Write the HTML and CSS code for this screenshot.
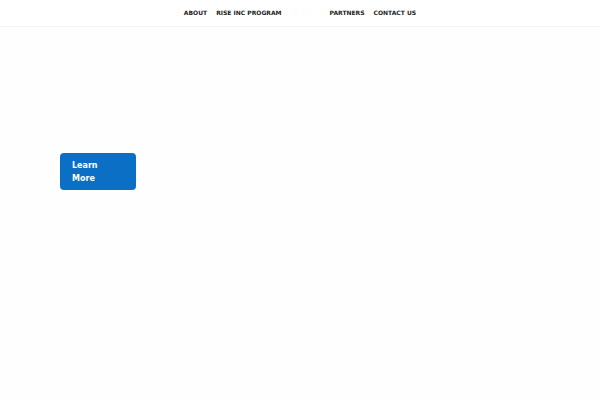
FILE: index.html
```
<!DOCTYPE html>
<html lang="en">
<head>
    <meta charset="UTF-8">
    <meta name="viewport" content="width=device-width, initial-scale=1.0">
    <title>Rise Inc</title>
    <link rel="stylesheet" href="styles.css">
</head>
<body>
    <header class="header">
        <nav class="nav">
            <a href="#about">ABOUT</a>
            <a href="#program">RISE INC PROGRAM</a>
            <a href="#home" class="logo" aria-label="Home">
                <svg viewBox="0 0 30 16" width="30" height="16">
                    <path d="M2 4v7M4 4h3v3H4l3 4M11 5v5h6M15 5h5M19 8h6M9 13h9" />
                </svg>
            </a>
            <a href="#partners">PARTNERS</a>
            <a href="#contact">CONTACT US</a>
        </nav>
    </header>
    <main class="hero">
        <a href="#learn" class="btn">Learn<br>More</a>
    </main>
</body>
</html>
```
FILE: styles.css
```
body {
    margin: 0;
    background-color: #fefefe;
    font-family: "DejaVu Sans", sans-serif;
}
.header {
    padding: 5px 0;
    background-color: #fff;
    border-bottom: 1px solid #f5f5f5;
}
.nav {
    display: flex;
    justify-content: center;
    align-items: center;
    gap: 9px;
}
.nav a {
    color: #222;
    font-size: 6px;
    font-weight: bold;
    line-height: 16px;
    text-decoration: none;
}
.logo svg {
    display: block;
    fill: none;
    stroke: #fcfcfc;
    stroke-width: 1;
}
.hero {
    display: flex;
    padding: 126px 10%;
}
.btn {
    box-sizing: border-box;
    min-width: 76px;
    padding: 6px 12px 5px;
    background-color: #0b70c5;
    border-radius: 4px;
    color: #fff;
    font-size: 8px;
    font-weight: bold;
    line-height: 13px;
    text-decoration: none;
}
```
